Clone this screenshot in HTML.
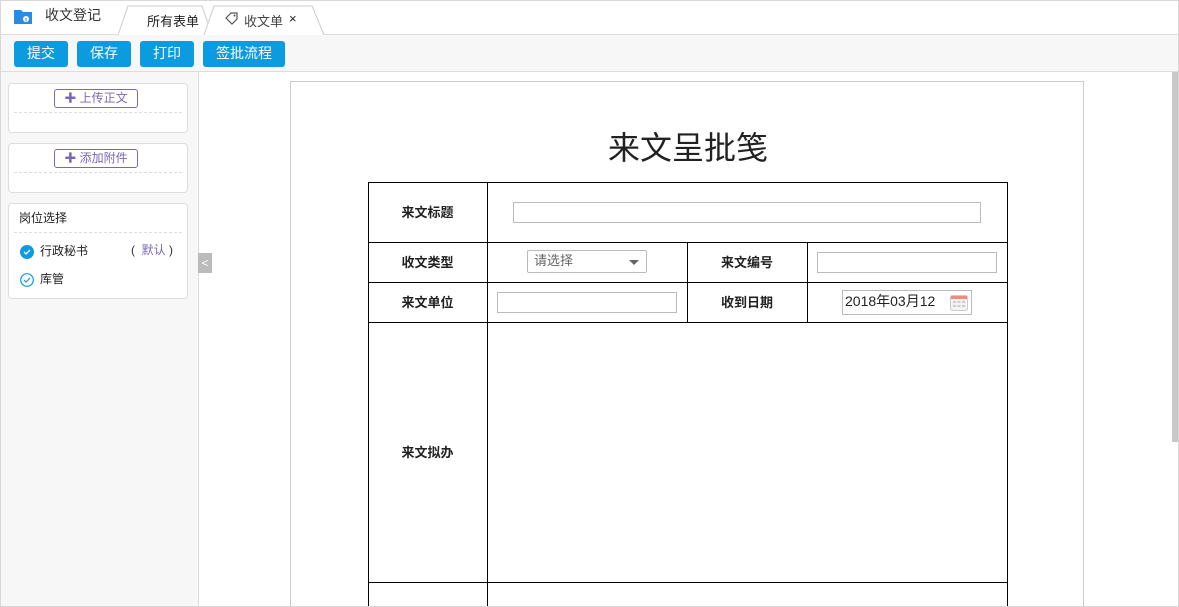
<!DOCTYPE html>
<html><head><meta charset="utf-8"><style>
*{box-sizing:border-box;margin:0;padding:0}
html,body{width:1179px;height:607px;overflow:hidden}
body{font-family:"Liberation Sans","Noto Sans CJK SC",sans-serif;font-size:13px;color:#222;background:#fff;position:relative}
.abs{position:absolute}
.btn{position:absolute;top:41px;height:26px;background:#0d9be0;color:#fff;border-radius:3px;font-size:14px;line-height:25px;text-align:center}
.card{position:absolute;left:8px;width:180px;background:#fff;border:1px solid #ddd;border-radius:4px}
.up{position:absolute;left:45px;top:5px;width:84px;height:19px;border:1px solid #7b68b5;border-radius:3px;color:#7b68b5;font-size:12px;line-height:16px;text-align:center}
.dash{position:absolute;left:5px;right:5px;border-top:1px dashed #ddd}
.line{position:absolute;background:#000}
.lbl{position:absolute;font-weight:bold;font-size:13px;text-align:center}
.inp{position:absolute;border:1px solid #bbb;height:21px;background:#fff}
</style></head><body>
<div class="abs" style="left:0;top:0;width:1179px;height:35px;border-bottom:1px solid #ddd;background:#fff"></div>
<svg class="abs" style="left:14px;top:8px" width="18" height="16"><path d="M0 2h7l2 2h9v12H0z" fill="#2a8be0"/><circle cx="12" cy="11" r="3" fill="#fff"/><rect x="11.5" y="10" width="1" height="3" fill="#2a8be0"/></svg>
<div class="abs" style="left:45px;top:5px;font-size:14px;color:#333">收文登记</div>
<svg class="abs" style="left:118px;top:4px" width="210" height="31"><path d="M0 31 L10 2 H84 L94 31" fill="#fff" stroke="#ccc"/><path d="M86 31 L96 2 H194 L206 31" fill="#fff" stroke="#ccc"/></svg>
<div class="abs" style="left:147px;top:11px;font-size:13px">所有表单</div>
<svg class="abs" style="left:224px;top:12px" width="16" height="14"><path d="M2 6 L7 1 H13 V7 L8 12 Z" fill="none" stroke="#555" stroke-width="1.2"/><circle cx="10.5" cy="3.5" r="1" fill="#555"/></svg>
<div class="abs" style="left:244px;top:11px;font-size:13px;color:#444">收文单</div>
<div class="abs" style="left:289px;top:11px;font-size:13px">×</div>
<div class="abs" style="left:0;top:35px;width:1179px;height:37px;background:#f7f7f7;border-bottom:1px solid #ddd"></div>
<div class="btn" style="left:14px;width:54px">提交</div>
<div class="btn" style="left:77px;width:54px">保存</div>
<div class="btn" style="left:140px;width:54px">打印</div>
<div class="btn" style="left:203px;width:82px">签批流程</div>
<div class="abs" style="left:0;top:72px;width:199px;height:535px;background:#f7f7f7;border-right:1px solid #ddd"></div>
<div class="card" style="top:83px;height:50px"><div class="up">✚ 上传正文</div><div class="dash" style="top:28px"></div></div>
<div class="card" style="top:143px;height:50px"><div class="up">✚ 添加附件</div><div class="dash" style="top:28px"></div></div>
<div class="card" style="top:203px;height:96px">
<div class="abs" style="left:10px;top:5px;font-size:12px">岗位选择</div>
<div class="dash" style="top:28px"></div>
<svg class="abs" style="left:11px;top:41px" width="14" height="14"><circle cx="7" cy="7" r="7" fill="#0d9be0"/><path d="M4 7l2 2 4-4" stroke="#fff" fill="none" stroke-width="1.3"/></svg>
<div class="abs" style="left:31px;top:38px;font-size:12px">行政秘书</div>
<div class="abs" style="left:122px;top:37px;font-size:12px;color:#333">( <span style="color:#7b68b5">&nbsp;默认</span> )</div>
<svg class="abs" style="left:11px;top:69px" width="14" height="14"><circle cx="7" cy="7" r="6.3" fill="none" stroke="#0d9be0" stroke-width="1.2"/><path d="M4 7l2 2 4-4" stroke="#0d9be0" fill="none" stroke-width="1.2"/></svg>
<div class="abs" style="left:31px;top:66px;font-size:12px">库管</div>
</div>
<div class="abs" style="left:198px;top:253px;width:14px;height:20px;background:#bbb;color:#fff;font-size:12px;line-height:20px;text-align:center">&lt;</div>
<div class="abs" style="left:1172px;top:72px;width:6px;height:370px;background:#c8c8c8"></div>
<div class="abs" style="left:290px;top:81px;width:794px;height:530px;border:1px solid #ccc;background:#fff"></div>
<div class="abs" style="left:368px;top:123px;width:640px;text-align:center;font-size:32px">来文呈批笺</div>
<div class="abs" style="left:368px;top:182px;width:640px;height:430px;border:1px solid #000"></div>
<div class="line" style="left:487px;top:182px;width:1px;height:430px"></div>
<div class="line" style="left:687px;top:242px;width:1px;height:80px"></div>
<div class="line" style="left:807px;top:242px;width:1px;height:80px"></div>
<div class="line" style="left:368px;top:242px;width:640px;height:1px"></div>
<div class="line" style="left:368px;top:282px;width:640px;height:1px"></div>
<div class="line" style="left:368px;top:322px;width:640px;height:1px"></div>
<div class="line" style="left:368px;top:582px;width:640px;height:1px"></div>
<div class="lbl" style="left:368px;top:202px;width:119px">来文标题</div>
<div class="lbl" style="left:368px;top:252px;width:119px">收文类型</div>
<div class="lbl" style="left:687px;top:252px;width:120px">来文编号</div>
<div class="lbl" style="left:368px;top:292px;width:119px">来文单位</div>
<div class="lbl" style="left:687px;top:292px;width:120px">收到日期</div>
<div class="lbl" style="left:368px;top:442px;width:119px">来文拟办</div>
<div class="inp" style="left:513px;top:202px;width:468px"></div>
<div class="inp" style="left:527px;top:250px;width:120px;height:23px;border-radius:2px;color:#666;font-size:13px;line-height:20px;padding-left:6px">请选择<span style="position:absolute;right:7px;top:9px;border:5px solid transparent;border-top-color:#666;border-bottom:0"></span></div>
<div class="inp" style="left:817px;top:252px;width:180px"></div>
<div class="inp" style="left:497px;top:292px;width:180px"></div>
<div class="inp" style="left:842px;top:290px;width:130px;height:25px;font-size:14px;line-height:21px;padding-left:2px">2018年03月12
<svg style="position:absolute;right:3px;top:3px" width="18" height="17"><rect x="0.5" y="1.5" width="17" height="15" rx="2" fill="#f3f3f3" stroke="#ccc"/><rect x="1" y="2" width="16" height="3" fill="#f08a7a"/><g fill="#ccc"><rect x="3" y="7" width="3" height="2"/><rect x="7.5" y="7" width="3" height="2"/><rect x="12" y="7" width="3" height="2"/><rect x="3" y="11" width="3" height="2"/><rect x="7.5" y="11" width="3" height="2"/><rect x="12" y="11" width="3" height="2"/></g></svg></div>
<div class="abs" style="left:0;top:0;width:1179px;height:607px;border:1px solid #d8d8d8;pointer-events:none"></div>
</body></html>
